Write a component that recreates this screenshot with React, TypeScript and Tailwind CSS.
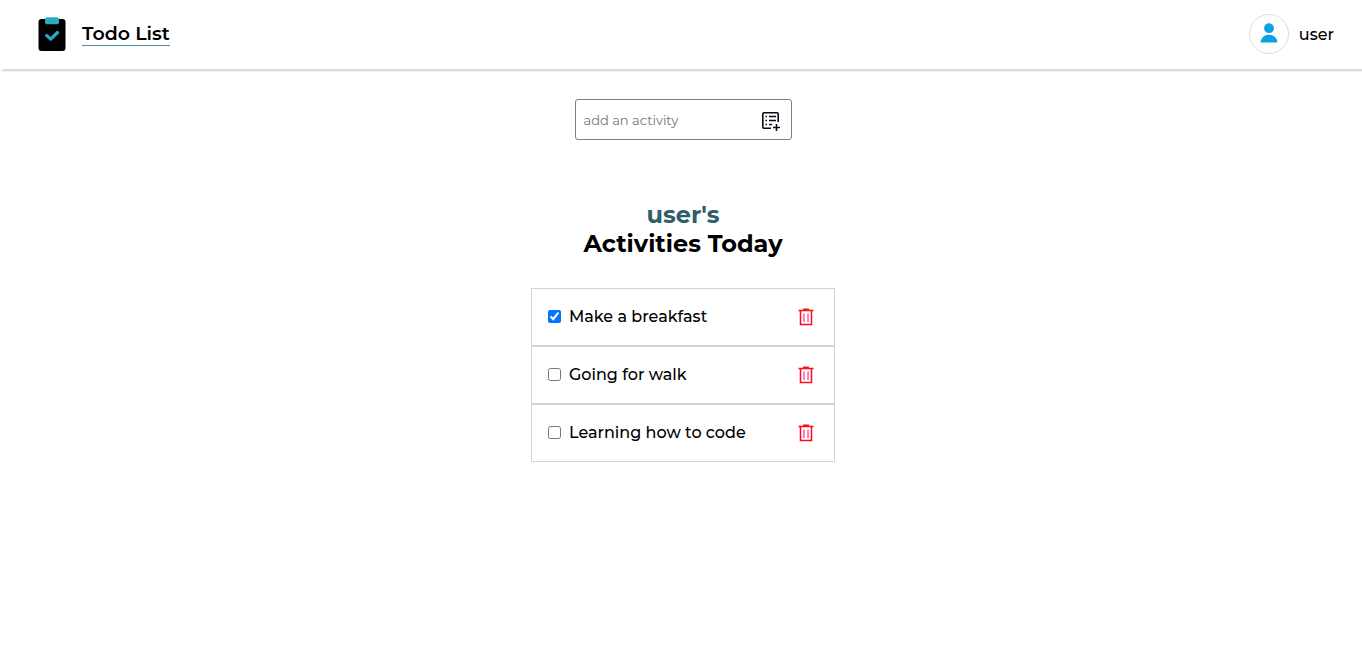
import { useState } from "react";

type Activity = { id: number; title: string; done: boolean };

const initialActivities: Activity[] = [
  { id: 1, title: "Make a breakfast", done: true },
  { id: 2, title: "Going for walk", done: false },
  { id: 3, title: "Learning how to code", done: false },
];

function ClipboardLogo() {
  return (
    <svg className="h-[34px] w-7" viewBox="0 0 28 34" aria-hidden="true">
      <rect x="0.5" y="2" width="27" height="32" rx="3" fill="#000" />
      <rect x="7" y="0.3" width="14" height="7" rx="2" fill="#2ba9c0" />
      <path d="M8.700 18.500l4 3.700 6.800-6.700" fill="none" stroke="#2ba9c0" strokeWidth="3.200" strokeLinecap="round" strokeLinejoin="round" />
    </svg>
  );
}

function PersonIcon() {
  return (
    <svg className="mb-0.5 h-5 w-[18px]" viewBox="0 0 18 20" fill="#0ba1e2" aria-hidden="true">
      <circle cx="9" cy="5.2" r="4.9" />
      <path d="M0.7 19.6v-1.1C1.5 14.3 5 11.8 9 11.8s7.500 2.500 8.300 6.700v1.100z" />
    </svg>
  );
}

function AddListIcon() {
  return (
    <svg className="size-5" viewBox="0 0 20 20" fill="none" stroke="#0a0a14" strokeWidth="1.600" aria-hidden="true">
      <path d="M10 17.200H3Q1.800 17.200 1.800 16V3Q1.800 1.800 3 1.800H16Q17.200 1.800 17.200 3V11" />
      <path d="M4.500 5.500h1.500M4.500 9.500h1.500M4.500 13.500h1.500M8 5.500h7M8 9.500h7M8 13.500h3" />
      <path d="M15.500 13v7M12 16.500h7" />
    </svg>
  );
}

function TrashIcon() {
  return (
    <svg className="h-[18px] w-4" viewBox="0 0 16 18" fill="none" aria-hidden="true">
      <path d="M0.500 2.500h15M5 1.300h6" stroke="#ff1010" strokeWidth="1.400" />
      <path d="M2.500 2.500v14h11v-14" stroke="#ff0a20" strokeWidth="1.500" />
      <path d="M6 5.500v8.500M10 5.500v8.500" stroke="#f4459a" strokeWidth="1.300" />
    </svg>
  );
}

export default function App() {
  const [activities, setActivities] = useState(initialActivities);
  const [draft, setDraft] = useState("");

  const add = () => {
    const title = draft.trim();
    if (!title) return;
    setActivities([...activities, { id: Date.now(), title, done: false }]);
    setDraft("");
  };

  return (
    <div className="min-h-screen bg-white font-[Montserrat,Inter,sans-serif] font-medium text-black">
      <header className="flex items-center justify-between pt-3.5 pr-7 pb-[15px] pl-[38px] shadow-[2px_2px_2px_#d3d3d3]">
        <div className="flex items-center gap-4">
          <ClipboardLogo />
          <h1 className="border-b border-[#4b8fa3] text-[19px] leading-[23px] font-semibold">Todo List</h1>
        </div>
        <div className="flex items-center gap-2.5">
          <span className="flex size-10 items-center justify-center rounded-full border border-[#dedede]">
            <PersonIcon />
          </span>
          <span className="pt-0.5 text-base">user</span>
        </div>
      </header>

      <main className="flex flex-col items-center pt-[30px] pl-1">
        <form
          className="flex h-[41px] w-[217px] items-center rounded-[3px] border border-[#808080] pt-0.5 pr-2.5 pl-2"
          onSubmit={(event) => {
            event.preventDefault();
            add();
          }}
        >
          <input
            className="min-w-0 flex-1 text-[13px] font-normal outline-none placeholder:text-[#757575]"
            type="text"
            aria-label="add an activity"
            placeholder="add an activity"
            value={draft}
            onChange={(event) => setDraft(event.target.value)}
          />
          <button type="submit" aria-label="Add">
            <AddListIcon />
          </button>
        </form>

        <h2 className="mt-[60px] text-center text-2xl leading-[29px] font-bold">
          <span className="block text-[#2f5d6b]">user's</span>
          Activities Today
        </h2>

        <ul className="mt-[30px] w-[304px]">
          {activities.map((activity) => (
            <li key={activity.id} className="flex h-[58px] items-center justify-between border border-[#d3d3d3] pr-5 pl-4">
              <label className="flex items-center gap-2 pb-0.5 leading-5">
                <input
                  type="checkbox"
                  className="size-[13px]"
                  checked={activity.done}
                  onChange={() =>
                    setActivities(activities.map((a) => (a.id === activity.id ? { ...a, done: !a.done } : a)))
                  }
                />
                <span className="pt-0.5">{activity.title}</span>
              </label>
              <button
                type="button"
                aria-label={`Delete ${activity.title}`}
                onClick={() => setActivities(activities.filter((a) => a.id !== activity.id))}
              >
                <TrashIcon />
              </button>
            </li>
          ))}
        </ul>
      </main>
    </div>
  );
}
